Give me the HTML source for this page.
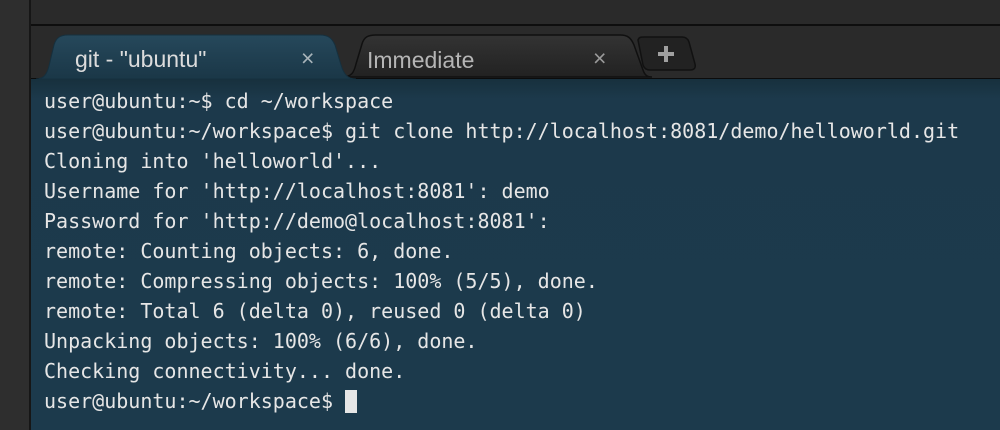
<!DOCTYPE html>
<html><head><meta charset="utf-8"><style>
html,body{margin:0;padding:0;width:1000px;height:430px;overflow:hidden;background:#2b2b2b}
.left{position:absolute;left:0;top:0;width:29px;height:430px;background:#2e2e2e;border-right:2px solid #161616}
.top{position:absolute;left:31px;top:0;width:969px;height:24px;background:#2a2a2a;border-bottom:2px solid #0e0e0e}
.bar{position:absolute;left:31px;top:26px;width:969px;height:52px;background:#2a2a2a}
.term{position:absolute;left:31px;top:78px;width:969px;height:352px;background:linear-gradient(#17303d 0px,#1c394b 20px,#1c3a4c 100%);border-top:1px solid #0c0c0c;box-sizing:border-box}
pre{margin:0;position:absolute;left:13px;top:7px;font-family:"DejaVu Sans Mono","Liberation Mono",monospace;font-size:20px;line-height:30px;color:#e6e6e6}
.cur{display:inline-block;width:12px;height:23px;background:#e6e6e6;vertical-align:-5px}
svg{position:absolute;left:0;top:0}
.t{font-family:"Liberation Sans",sans-serif;font-size:23px}
</style></head><body>
<div class="left"></div><div class="top"></div><div class="bar"></div>
<div class="term"><pre>user@ubuntu:~$ cd ~/workspace
user@ubuntu:~/workspace$ git clone http://localhost:8081/demo/helloworld.git
Cloning into 'helloworld'...
Username for 'http://localhost:8081': demo
Password for 'http://demo@localhost:8081':
remote: Counting objects: 6, done.
remote: Compressing objects: 100% (5/5), done.
remote: Total 6 (delta 0), reused 0 (delta 0)
Unpacking objects: 100% (6/6), done.
Checking connectivity... done.
user@ubuntu:~/workspace$ <span class="cur"></span></pre></div>
<svg width="1000" height="80">
<defs><linearGradient id="a" x1="0" y1="0" x2="0" y2="1"><stop offset="0" stop-color="#26485b"/><stop offset="1" stop-color="#1a3747"/></linearGradient>
<linearGradient id="b" x1="0" y1="0" x2="0" y2="1"><stop offset="0" stop-color="#333"/><stop offset="1" stop-color="#222"/></linearGradient></defs>
<path d="M342 77 C352 77 354 72 356 64 L362 44 C364 37 368 35 376 35 L620 35 C628 35 631 38 634 45 L643 70 C645 76 648 77 652 77 Z" fill="url(#b)" stroke="#101010" stroke-width="1.5"/>
<path d="M638 40 C639 37 641 37 644 37 L682 37 C686 37 688 39 689 42 L695 64 C696 68 694 70 690 70 L650 70 C646 70 644 68 643 65 Z" fill="#222" stroke="#111" stroke-width="1.5"/>
<path d="M658 54 h16 M666 46 v16" stroke="#a0a0a0" stroke-width="4"/>
<path d="M36 79 C44 79 47 74 49 66 L54 45 C56 38 60 35 68 35 L320 35 C328 35 332 38 335 45 L341 65 C344 75 348 79 356 79 Z" fill="url(#a)" stroke="#16303e" stroke-width="1"/>
<text x="75" y="67" class="t" fill="#dcdcdc">git - "ubuntu"</text>
<text x="301" y="66" class="t" fill="#a8b4ba" font-size="22">×</text>
<text x="367" y="68" class="t" fill="#b5b5b5">Immediate</text>
<text x="593" y="66" class="t" fill="#9a9a9a" font-size="22">×</text>
</svg>
</body></html>
